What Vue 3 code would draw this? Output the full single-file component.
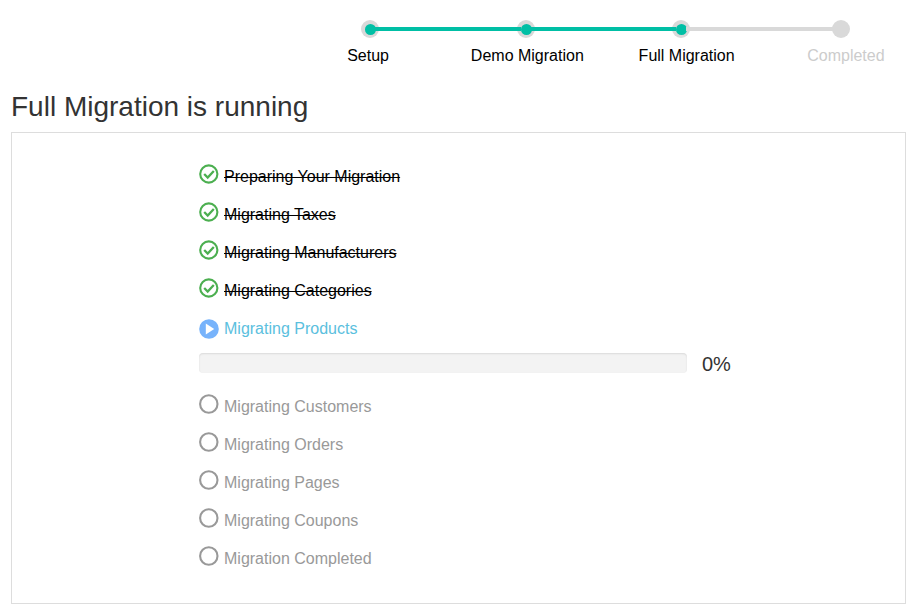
<script setup>
const steps = [
  { label: 'Setup', state: 'done' },
  { label: 'Demo Migration', state: 'done' },
  { label: 'Full Migration', state: 'current' },
  { label: 'Completed', state: 'todo' }
]
const before = ['Preparing Your Migration', 'Migrating Taxes', 'Migrating Manufacturers', 'Migrating Categories']
const after = ['Migrating Customers', 'Migrating Orders', 'Migrating Pages', 'Migrating Coupons', 'Migration Completed']
</script>

<template>
  <div class="page">
    <div class="track">
      <span class="dot on"></span>
      <span class="line l1 teal"></span>
      <span class="dot on"></span>
      <span class="line l2 teal"></span>
      <span class="dot on"></span>
      <span class="line l3"></span>
      <span class="dot"></span>
    </div>
    <div class="labels">
      <span v-for="s in steps" :key="s.label" :class="['label', s.state]">{{ s.label }}</span>
    </div>
    <h1 class="title">Full Migration is running</h1>
    <div class="panel">
      <ul class="tasks">
        <li v-for="t in before" :key="t" class="task">
          <svg class="icon" viewBox="0 0 20 20">
            <circle cx="9.8" cy="10" r="8.6" fill="none" stroke="#4caf50" stroke-width="2.1" />
            <path d="M5.2 10 L8.7 13.5 L14.8 7" fill="none" stroke="#4caf50" stroke-width="2.3" />
          </svg>
          <span class="done-text">{{ t }}</span>
        </li>
        <li class="task">
          <svg class="icon play" viewBox="0 0 20 20">
            <circle cx="10" cy="10" r="9.8" fill="#77b3fb" />
            <path d="M6.8 4.6 L15.2 10 L6.8 15.4 Z" fill="#fff" />
          </svg>
          <span class="active-text">Migrating Products</span>
        </li>
        <li class="progress-row">
          <div class="bar"></div>
          <span class="pct">0%</span>
        </li>
        <li v-for="t in after" :key="t" class="task">
          <svg class="icon" viewBox="0 0 20 20">
            <circle cx="9.8" cy="10" r="8.7" fill="none" stroke="#999" stroke-width="2.1" />
          </svg>
          <span class="todo-text">{{ t }}</span>
        </li>
      </ul>
    </div>
  </div>
</template>

<style scoped>
.page {
  width: 919px;
  height: 606px;
  box-sizing: border-box;
  padding: 20px 13px 0 11px;
  font-family: "Liberation Sans", Arial, sans-serif;
  color: #333;
  background: #fff;
  overflow: hidden;
}
.track {
  display: flex;
  align-items: center;
  height: 18px;
  margin-left: 350px;
  width: 489px;
}
.dot {
  flex: none;
  width: 18px;
  height: 18px;
  border-radius: 50%;
  background: #d9d9d9;
  display: flex;
  align-items: center;
  justify-content: center;
}
.dot.on::after {
  content: "";
  width: 11px;
  height: 11px;
  border-radius: 50%;
  background: #00bfa5;
}
.line {
  height: 4px;
  background: #d9d9d9;
  margin: 0 -4px;
}
.line.teal {
  background: #00bfa5;
  position: relative;
}
.l1 { width: 146px; }
.l2 { width: 145px; }
.l3 { width: 150px; }
.labels {
  display: grid;
  grid-template-columns: repeat(4, 159.3px);
  margin: 9px 0 0 277.4px;
  font-size: 16px;
  line-height: 18px;
  text-align: center;
}
.label { color: #000; white-space: nowrap; }
.label.todo { color: #ccc; }
.title {
  margin: 24px 0 0;
  font-size: 28px;
  font-weight: 400;
  line-height: 36px;
  color: #333;
}
.panel {
  box-sizing: border-box;
  height: 472px;
  margin-top: 7px;
  border: 1px solid #ddd;
  padding: 25px 0 0 187px;
}
.tasks {
  list-style: none;
  margin: 0;
  padding: 0;
}
.task {
  display: flex;
  align-items: center;
  gap: 5px;
  height: 38px;
  font-size: 16px;
}
.icon {
  flex: none;
  width: 20px;
  height: 20px;
  margin-top: -6px;
}
.icon.play { margin-top: -1px; }
.done-text { color: #000; text-decoration: line-through; }
.active-text { color: #5bc0de; }
.todo-text { color: #999; }
.progress-row {
  display: flex;
  align-items: flex-start;
  gap: 15px;
  height: 40px;
  padding-top: 5px;
  box-sizing: border-box;
}
.bar {
  width: 488px;
  height: 20px;
  border-radius: 4px;
  background: #f3f3f3;
  box-shadow: inset 0 1px 2px rgba(0, 0, 0, .1);
}
.pct {
  font-size: 20px;
  line-height: 22px;
  color: #333;
}
</style>
